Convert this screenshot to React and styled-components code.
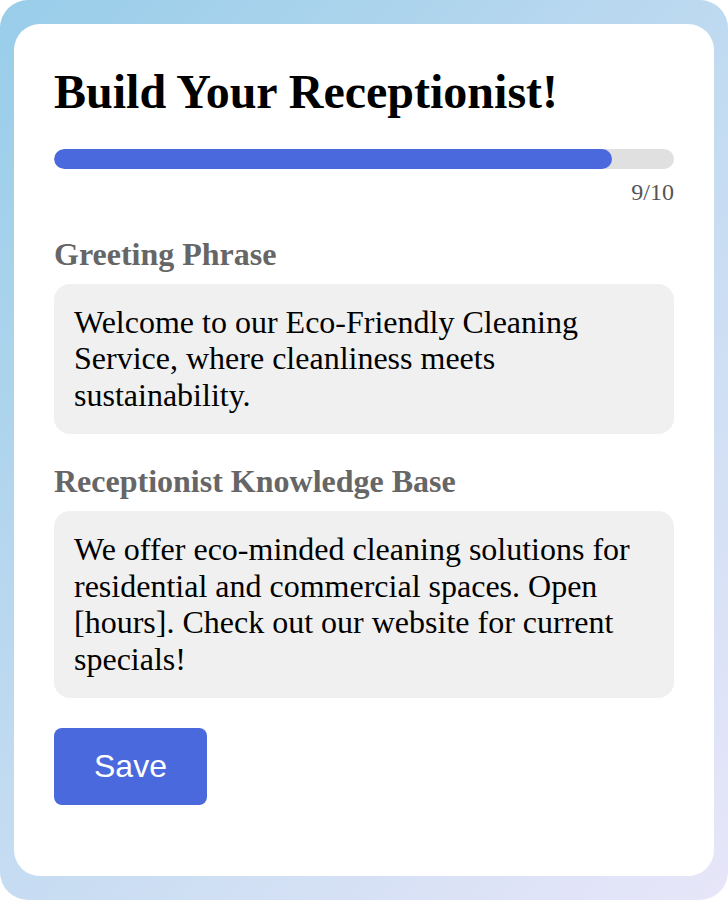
import styled, { createGlobalStyle } from "styled-components";

const GlobalStyle = createGlobalStyle`
  * { box-sizing: border-box; }
  html, body { margin: 0; padding: 0; background: #ffffff; }
  body { font-family: "Liberation Serif", "Times New Roman", serif; }
`;

const Frame = styled.div`
  width: 728px;
  height: 900px;
  padding: 24px 14px;
  border-radius: 28px;
  background: linear-gradient(135deg, #98cde9 0%, #c2dbf1 50%, #e8e6f9 100%);
  display: flex;
`;

const Card = styled.div`
  flex: 1;
  background: #ffffff;
  border-radius: 26px;
  padding: 40px;
  display: flex;
  flex-direction: column;
`;

const Title = styled.h1`
  margin: 0;
  font-size: 48px;
  line-height: 1.15;
  font-weight: bold;
  color: #000;
`;

const Track = styled.div`
  margin-top: 30px;
  height: 20px;
  border-radius: 10px;
  background: #e0e0e0;
  overflow: hidden;
`;

const Fill = styled.div`
  height: 100%;
  border-radius: 10px;
  background: #4a69dd;
`;

const Count = styled.div`
  margin-top: 10px;
  text-align: right;
  font-size: 24px;
  line-height: 1.15;
  color: #555;
`;

const Label = styled.label`
  display: block;
  margin-top: ${(p) => p.$gap}px;
  font-size: 32px;
  line-height: 1.15;
  font-weight: bold;
  color: #666;
`;

const Field = styled.textarea`
  display: block;
  width: 100%;
  margin-top: 11px;
  padding: 20px;
  border: none;
  outline: none;
  resize: none;
  overflow: hidden;
  border-radius: 16px;
  background: #f0f0f0;
  font-family: "Liberation Serif", "Times New Roman", serif;
  font-size: 32px;
  line-height: 1.15;
  color: #000;
`;

const SaveButton = styled.button`
  align-self: flex-start;
  margin-top: 30px;
  padding: 20px 40px;
  border: none;
  border-radius: 8px;
  background: #4a69dd;
  color: #fff;
  font-family: "Liberation Sans", Arial, sans-serif;
  font-size: 32px;
  line-height: 1.15;
  cursor: pointer;
`;

const step = 9;
const total = 10;

export default function App() {
  return (
    <>
      <GlobalStyle />
      <Frame>
        <Card>
          <Title>Build Your Receptionist!</Title>
          <Track>
            <Fill style={{ width: `${(step / total) * 100}%` }} />
          </Track>
          <Count>
            {step}/{total}
          </Count>
          <Label $gap={29} htmlFor="greeting">Greeting Phrase</Label>
          <Field
            id="greeting"
            rows={3}
            defaultValue="Welcome to our Eco-Friendly Cleaning Service, where cleanliness meets sustainability."
          />
          <Label $gap={29} htmlFor="knowledge">Receptionist Knowledge Base</Label>
          <Field
            id="knowledge"
            rows={4}
            defaultValue="We offer eco-minded cleaning solutions for residential and commercial spaces. Open [hours]. Check out our website for current specials!"
          />
          <SaveButton>Save</SaveButton>
        </Card>
      </Frame>
    </>
  );
}
